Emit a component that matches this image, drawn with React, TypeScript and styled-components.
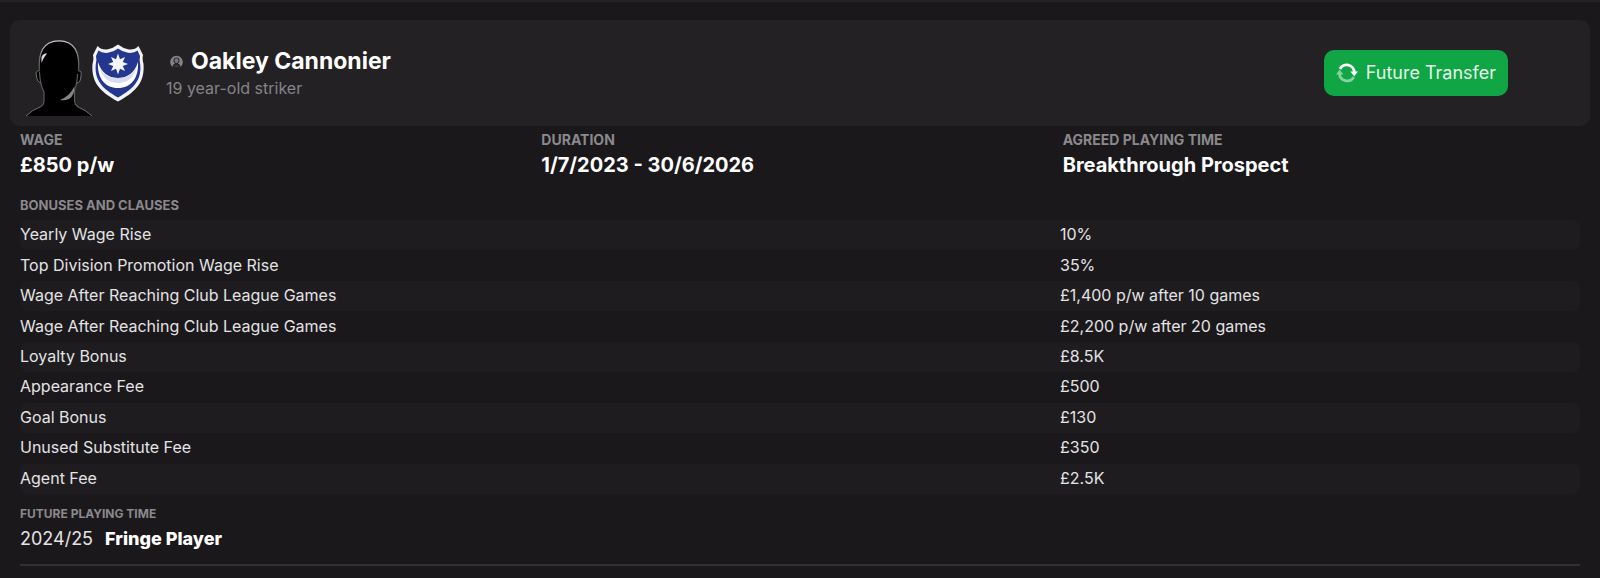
import React from "react";
import styled, { createGlobalStyle } from "styled-components";

const GlobalStyle = createGlobalStyle`
  *, *::before, *::after { box-sizing: border-box; }
  body {
    margin: 0;
    background: #1a181b;
    color: #ffffff;
    font-family: Inter, "Liberation Sans", sans-serif;
  }
`;

const Page = styled.main`
  border-top: 2px solid #232124;
  padding: 18px 10px 12px;
`;

const PlayerCard = styled.header`
  display: flex;
  align-items: center;
  height: 106px;
  padding: 0 82px 0 16px;
  border-radius: 10px;
  background: #232124;
`;

const Portrait = styled.svg`
  width: 66px;
  height: 76px;
  margin-top: 10px;
`;

const Crest = styled.svg`
  width: 52px;
  height: 58px;
`;

const Identity = styled.div`
  flex: 1;
  margin-left: 22px;
`;

const NameLine = styled.div`
  display: flex;
  align-items: center;
  gap: 8px;
  padding-left: 4px;
`;

const Name = styled.h1`
  margin: 0;
  font-size: 23px;
  line-height: 30px;
  font-weight: 700;
`;

const Description = styled.p`
  margin: 0;
  font-size: 16px;
  line-height: 24px;
  color: #858486;
`;

const TransferButton = styled.button`
  display: flex;
  align-items: center;
  justify-content: center;
  gap: 8px;
  height: 46px;
  padding: 0 12px;
  border: 0;
  border-radius: 10px;
  background: #10a545;
  color: #e6f7e9;
  font-family: inherit;
  font-size: 18px;
  line-height: 24px;
  white-space: nowrap;
`;

const Details = styled.div`
  padding: 4px 10px 0;
`;

const Terms = styled.dl`
  display: grid;
  grid-template-columns: repeat(3, 1fr);
  gap: 4px;
  margin: 0 0 15px;
`;

const Label = styled.dt<{ $size: number }>`
  font-size: ${({ $size }) => $size}px;
  line-height: 20px;
  font-weight: 700;
  color: #8a898b;
  text-transform: uppercase;
`;

const Value = styled.dd`
  margin: 0;
  font-size: 20px;
  line-height: 30px;
  font-weight: 700;
`;

const Clauses = styled.table`
  width: 100%;
  height: 274px;
  border-collapse: separate;
  border-spacing: 0;
  table-layout: fixed;

  caption {
    height: 25px;
    text-align: left;
    font-size: 13px;
    line-height: 20px;
    font-weight: 700;
    color: #8a898b;
    text-transform: uppercase;
  }
`;

const ClauseRow = styled.tr`
  th, td {
    padding: 0 0 2px;
    font-size: 16px;
    line-height: 24px;
    font-weight: 400;
    text-align: left;
    color: #e4e3e5;
  }
  th { width: 66.6667%; border-radius: 8px 0 0 8px; }
  td { border-radius: 0 8px 8px 0; }
  &:nth-child(odd) th, &:nth-child(odd) td { background: #1e1c1f; }
`;

const Future = styled.dl`
  display: grid;
  margin: 0;
  padding: 10px 0;
  border-bottom: 2px solid #323033;
`;

const FutureValue = styled.dd`
  display: flex;
  gap: 12px;
  margin: 0;
  font-size: 18px;
  line-height: 30px;
  font-weight: 800;
`;

const Season = styled.span`
  font-weight: 400;
  color: #e4e3e5;
`;

const clauses = [
  ["Yearly Wage Rise", "10%"],
  ["Top Division Promotion Wage Rise", "35%"],
  ["Wage After Reaching Club League Games", "£1,400 p/w after 10 games"],
  ["Wage After Reaching Club League Games", "£2,200 p/w after 20 games"],
  ["Loyalty Bonus", "£8.5K"],
  ["Appearance Fee", "£500"],
  ["Goal Bonus", "£130"],
  ["Unused Substitute Fee", "£350"],
  ["Agent Fee", "£2.5K"],
];

function PlayerPortrait() {
  return (
    <Portrait viewBox="0 0 66 76" aria-hidden="true">
      <defs>
        <linearGradient id="rim" x1="0" y1="0" x2="0" y2="1">
          <stop offset="0" stopColor="#c8c8c8" />
          <stop offset=".4" stopColor="#888" />
          <stop offset="1" stopColor="#484848" />
        </linearGradient>
      </defs>
      <path d="M0 76 Q6 70 14 67 Q18 65 18 61 L18 52 Q16 48 15 43 Q11 42 10.500 36 Q9 30 13.500 31 C12 13 17 .8 33 .8 C49 .8 54 13 52.500 31 Q56 30 55 36 Q54.500 43 51 43 Q50 47 48.500 50 L48.500 61 Q49 65 52 67 Q60 70 66 76Z" fill="#000" />
      <path d="M13.500 31 C12 13 17 .8 33 .8 C49 .8 54 13 52.500 31" fill="none" stroke="url(#rim)" strokeWidth="1.300" />
      <path d="M13.500 31 Q9 30 10.500 36 Q11 42 15 43 M52.500 31 Q56 30 55 36 Q54.500 43 51 43" fill="none" stroke="#737373" strokeWidth="1" />
      <path d="M13.500 32 Q14 45 18 52 V61 Q18 65 14 67 M51.500 34 Q51 45 48.500 50 V61 Q49 65 52 67" fill="none" stroke="#606060" strokeWidth="1.100" />
      <path d="M0 76 Q6 70 14 67 M52 67 Q60 70 66 76" fill="none" stroke="#707070" strokeWidth="1" />
      <path d="M21 13.500 Q17 13 15.500 17 L15.500 23 Q17 18 21 13.500Z" fill="#ddd" />
      <path d="M34 60 Q44 56 48.500 46 Q48.500 56 43 59 Q38 61 34 60Z" fill="#858585" />
    </Portrait>
  );
}

function ClubCrest() {
  return (
    <Crest viewBox="0 0 52 58" aria-hidden="true">
      <path d="M5.500 2 Q9 6 15 5.500 Q21 4.500 26 .5 Q31 4.500 37 5.500 Q43 6 46.500 2 L51 11 Q50 15 51.500 20 C53 39 43 48 26 57.500 C9 48 -1 39 .5 20 Q2 15 1 11Z" fill="#f3f3fa" />
      <path d="M6.500 6.500 Q10 9.500 16 8.800 Q22 7.800 26 4.500 Q30 7.800 36 8.800 Q42 9.500 45.500 6.500 L48 12 Q47 16 48.300 21 C49.500 37 41 45 26 53.500 C11 45 2.500 37 3.700 21 Q5 16 4 12Z" fill="#24378e" />
      <path d="M6 18 C9 28 16 34 26 34 C36 34 43 28 46 18 C47 34 39 44 26 44 C13 44 5 34 6 18Z" fill="#fff" />
      <path d="M7 22 C11 31 18 34 26 34 C34 34 41 31 45 22 C42 34 35 39 26 39 C17 39 10 34 7 22Z" fill="#d8dcf0" />
      <path d="M26 9.500 L28 15.200 L33 13 L30.800 18 L36 20 L30.800 22 L33 27 L28 24.800 L26 30.500 L24 24.800 L19 27 L21.200 22 L16 20 L21.200 18 L19 13 L24 15.200Z" fill="#f3f3fa" />
    </Crest>
  );
}

function PersonIcon() {
  return (
    <svg width="13" height="13" viewBox="0 0 13 13" aria-hidden="true">
      <path d="M2.500 12 A6.300 6.300 0 1 1 10.500 12 Q10.500 9.400 8 8.600 A3 3.300 0 1 0 5 8.600 Q2.500 9.400 2.500 12Z" fill="#858386" />
      <ellipse cx="6.500" cy="5.700" rx="2" ry="2.400" fill="#777578" />
      <path d="M4 12.300 Q4 10 6.500 9.600 Q9 10 9 12.300Z" fill="#39373a" />
    </svg>
  );
}

function TransferIcon() {
  return (
    <svg width="22" height="20" viewBox="0 0 22 20" aria-hidden="true">
      <path d="M4 6 A7.600 7.600 0 0 1 18.300 9.500" fill="none" stroke="#fff" strokeWidth="2.800" />
      <path d="M14.300 8.500 H22 L18.300 13.200Z" fill="#fff" />
      <path d="M17.700 14 A7.600 7.600 0 0 1 3.500 10.500" fill="none" stroke="#87d3a0" strokeWidth="2.800" />
      <path d="M0 11.500 H7.500 L3.600 6.800Z" fill="#87d3a0" />
    </svg>
  );
}

export default function App() {
  return (
    <>
      <GlobalStyle />
      <Page>
        <PlayerCard>
          <PlayerPortrait />
          <ClubCrest />
          <Identity>
            <NameLine>
              <PersonIcon />
              <Name>Oakley Cannonier</Name>
            </NameLine>
            <Description>19 year-old striker</Description>
          </Identity>
          <TransferButton type="button">
            <TransferIcon />
            Future Transfer
          </TransferButton>
        </PlayerCard>
        <Details>
          <Terms>
            <div>
              <Label $size={14}>Wage</Label>
              <Value>£850 p/w</Value>
            </div>
            <div>
              <Label $size={14}>Duration</Label>
              <Value>1/7/2023 - 30/6/2026</Value>
            </div>
            <div>
              <Label $size={14}>Agreed Playing Time</Label>
              <Value>Breakthrough Prospect</Value>
            </div>
          </Terms>
          <Clauses>
            <caption>Bonuses and Clauses</caption>
            <tbody>
              {clauses.map(([name, value], index) => (
                <ClauseRow key={index}>
                  <th scope="row">{name}</th>
                  <td>{value}</td>
                </ClauseRow>
              ))}
            </tbody>
          </Clauses>
          <Future>
            <Label $size={12}>Future Playing Time</Label>
            <FutureValue>
              <Season>2024/25</Season>
              <span>Fringe Player</span>
            </FutureValue>
          </Future>
        </Details>
      </Page>
    </>
  );
}
